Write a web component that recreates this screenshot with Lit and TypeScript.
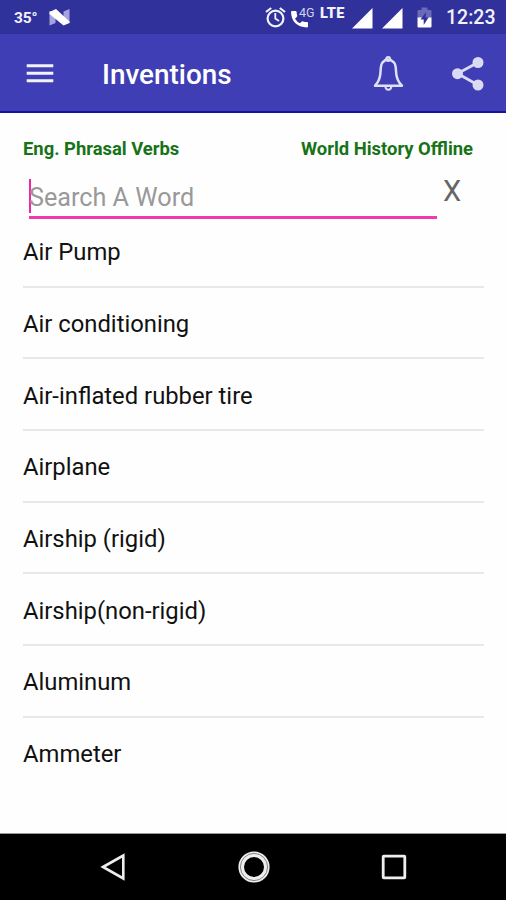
import { LitElement, html, css } from "lit";
import { customElement, property } from "lit/decorators.js";

const INVENTIONS = [
  "Air Pump",
  "Air conditioning",
  "Air-inflated rubber tire",
  "Airplane",
  "Airship (rigid)",
  "Airship(non-rigid)",
  "Aluminum",
  "Ammeter",
];

@customElement("status-bar")
class StatusBar extends LitElement {
  static styles = css`
    :host { display: flex; height: 34px; flex: none; background: #30319b; color: #f2f2fb; align-items: center; position: relative; padding-right: 11px; box-sizing: border-box; }
    svg { display: block; flex: none; }
    .temp { font-size: 15.5px; font-weight: 700; margin-left: 14px; width: 35px; line-height: 34px; padding-top: 1px; letter-spacing: -.2px; }
    .space { flex: 1; }
    .phone { display: flex; position: relative; width: 24px; height: 24px; margin-left: 5px; }
    .gen { position: absolute; left: 8px; top: 1px; font-size: 12.5px; line-height: 13px; color: #d2d3f0; }
    .lte { font-size: 14.5px; font-weight: 900; line-height: 16px; margin: -7px 0 0 5px; width: 25px; letter-spacing: .3px; }
    .signal { margin-left: 7px; }
    .signal + .signal { margin-left: 9px; }
    .battery { margin-left: 14px; }
    .time { font-size: 19.5px; font-weight: 500; width: 49px; margin-left: 14px; line-height: 34px; white-space: nowrap; padding-top: 2px; }
  `;

  private signal() {
    return html`<svg class="signal" width="21" height="34" viewBox="0 0 21 34"><path d="M0 28.5L20.5 8V28.5Z" fill="#fff" /></svg>`;
  }

  render() {
    return html`
      <span class="temp">35°</span>
      <svg width="21" height="34" viewBox="0 0 21 34">
        <path d="M.5 11H6.5V23L.5 25.5ZM14.5 11.5L20.5 9V23H14.5Z" fill="#a3a4de" />
        <path d="M.5 12L7 9L20.5 21.5V23L14.5 25.5L.5 14Z" fill="#fff" />
      </svg>
      <span class="space"></span>
      <svg width="21" height="34" viewBox="0 0 21 34" fill="none" stroke="#f2f2fb" stroke-width="2.2">
        <circle cx="10.5" cy="18.5" r="7.9" />
        <path d="M10.3 13V18.5L14 21" stroke-width="1.8" />
        <path d="M1 12L6.2 8M20 12L14.8 8" />
      </svg>
      <span class="phone">
        <svg width="18" height="24" viewBox="0 0 18 24"><path d="M1 6H4.8Q5.5 6 5.6 7Q5.7 9 6.2 10.6Q6.4 11.3 5.9 11.8L4 13.7Q6.2 17.2 9 18.2L10.8 16.6Q11.3 16.1 12 16.4Q13.8 17 16 17.1Q17 17.2 17 18V21.5Q17 22.5 16 22.5Q0.5 21.5 0 7Q0 6 1 6Z" fill="#fff" /></svg>
        <span class="gen">4G</span>
      </span>
      <span class="lte">LTE</span>
      ${this.signal()}${this.signal()}
      <svg class="battery" width="15" height="34" viewBox="0 0 15 34">
        <path d="M4.5 7.5H10.5V10H13.5Q14.5 10 14.5 11V18H.5V11Q.5 10 1.5 10H4.5Z" fill="#6a6bb8" />
        <path d="M.5 17.5H14.5V26.5Q14.5 27.5 13.5 27.5H1.5Q.5 27.5 .5 26.5Z" fill="#fff" />
        <path d="M9 12L3.5 19.5H6.7V25L11.7 17.3H8.5Z" fill="#30319b" />
      </svg>
      <span class="time">12:23</span>
    `;
  }
}

@customElement("app-bar")
class AppBar extends LitElement {
  static styles = css`
    :host { display: flex; height: 79px; flex: none; box-sizing: border-box; background: #3f3eb4; border-bottom: 2px solid #16129b; align-items: center; padding: 0 22px 0 26px; color: #fff; }
    svg { display: block; flex: none; }
    h1 { margin: 5px 0 0 48px; flex: 1; font-size: 27.9px; font-weight: 500; line-height: 36px; }
    .share { margin-left: 48px; }
  `;

  render() {
    return html`
      <svg width="28" height="77" viewBox="0 0 28 77"><path d="M.7 31.8H27.3M.7 39.3H27.3M.7 46.8H27.3" stroke="#f2f2fb" stroke-width="3" /></svg>
      <h1>Inventions</h1>
      <svg width="32" height="77" viewBox="0 0 32 77" fill="none" stroke="#dfe0f6">
        <path d="M3 51.7Q8.3 46.5 8.6 37Q8.8 30.5 10.5 28.5L14 25.5H18L22 28.5Q23.8 30.5 24 37Q24.3 46.5 30 51.7Z" stroke-width="2.5" stroke-linejoin="round" />
        <circle cx="16.2" cy="25" r="2" stroke-width="1.8" />
        <path d="M13.4 52.5Q13.6 55.7 16.4 55.7Q19.2 55.7 19.4 52.5" stroke-width="2" />
      </svg>
      <svg class="share" width="32" height="77" viewBox="0 0 32 77" fill="#dadbf3">
        <path d="M26 28.5L5.5 39.5L26 51" fill="none" stroke="#dadbf3" stroke-width="2.8" />
        <circle cx="26" cy="28.5" r="5.5" /><circle cx="5.5" cy="39.7" r="5.5" /><circle cx="26" cy="51" r="5.5" />
      </svg>
    `;
  }
}

@customElement("search-box")
class SearchBox extends LitElement {
  static styles = css`
    :host { display: flex; height: 49px; }
    .field { box-sizing: border-box; width: 408px; height: 40px; margin: 12px 0 -3px 6px; padding-top: 2px; border-bottom: 3px solid #f03bb0; display: flex; color: #999; font-size: 25.2px; line-height: 34px; flex: none; }
    .caret { width: 2px; height: 34px; margin-top: -2px; background: #ec28a8; margin-right: -2px; }
    .clear { margin: 7px 0 0 6px; font-size: 29px; line-height: 34px; color: #666; }
  `;

  render() {
    return html`
      <div class="field"><span class="caret"></span><span class="hint">Search A Word</span></div>
      <span class="clear">X</span>
    `;
  }
}

@customElement("word-list")
class WordList extends LitElement {
  @property({ attribute: false }) words: string[] = [];

  static styles = css`
    .word { box-sizing: border-box; height: 71.7px; padding-top: 20.3px; font-size: 23.8px; line-height: 32px; color: #111; border-bottom: 2px solid #e8e8e8; }
    .word:last-child { border-bottom: 0; }
  `;

  render() {
    return this.words.map((word) => html`<div class="word">${word}</div>`);
  }
}

@customElement("nav-bar")
class NavBar extends LitElement {
  static styles = css`
    :host { display: flex; flex: none; height: 67px; box-sizing: border-box; background: #000; border-top: 1px solid #999; justify-content: space-between; padding: 0 99px 0 100px; }
    svg { display: block; }
  `;

  render() {
    return html`
      <svg width="26" height="66" viewBox="0 0 26 66"><path d="M3 33L23.3 21.5V44.5Z" fill="none" stroke="#eee" stroke-width="2.6" /></svg>
      <svg width="34" height="66" viewBox="0 0 34 66" fill="none">
        <circle cx="17" cy="33" r="12.8" stroke="#eee" stroke-width="5.6" />
        <circle cx="17" cy="33" r="13.6" stroke="#777" stroke-width=".9" />
      </svg>
      <svg width="26" height="66" viewBox="0 0 26 66"><rect x="2.2" y="22.2" width="21.6" height="21.6" rx=".6" fill="none" stroke="#eee" stroke-width="2.8" /></svg>
    `;
  }
}

@customElement("app-root")
class AppRoot extends LitElement {
  static styles = css`
    :host { display: flex; flex-direction: column; width: 506px; height: 900px; overflow: hidden; background: #fefefe; font-family: Roboto, "Liberation Sans", sans-serif; }
    main { flex: 1; padding: 0 22px 0 23px; min-height: 0; }
    .links { display: flex; justify-content: space-between; padding: 24px 11px 0 0; font-size: 18.4px; line-height: 24px; height: 54px; box-sizing: border-box; font-weight: 700; color: #167316; }
  `;

  render() {
    return html`
      <status-bar></status-bar>
      <app-bar></app-bar>
      <main>
        <div class="links"><span>Eng. Phrasal Verbs</span><span>World History Offline</span></div>
        <search-box></search-box>
        <word-list .words=${INVENTIONS}></word-list>
      </main>
      <nav-bar></nav-bar>
    `;
  }
}
